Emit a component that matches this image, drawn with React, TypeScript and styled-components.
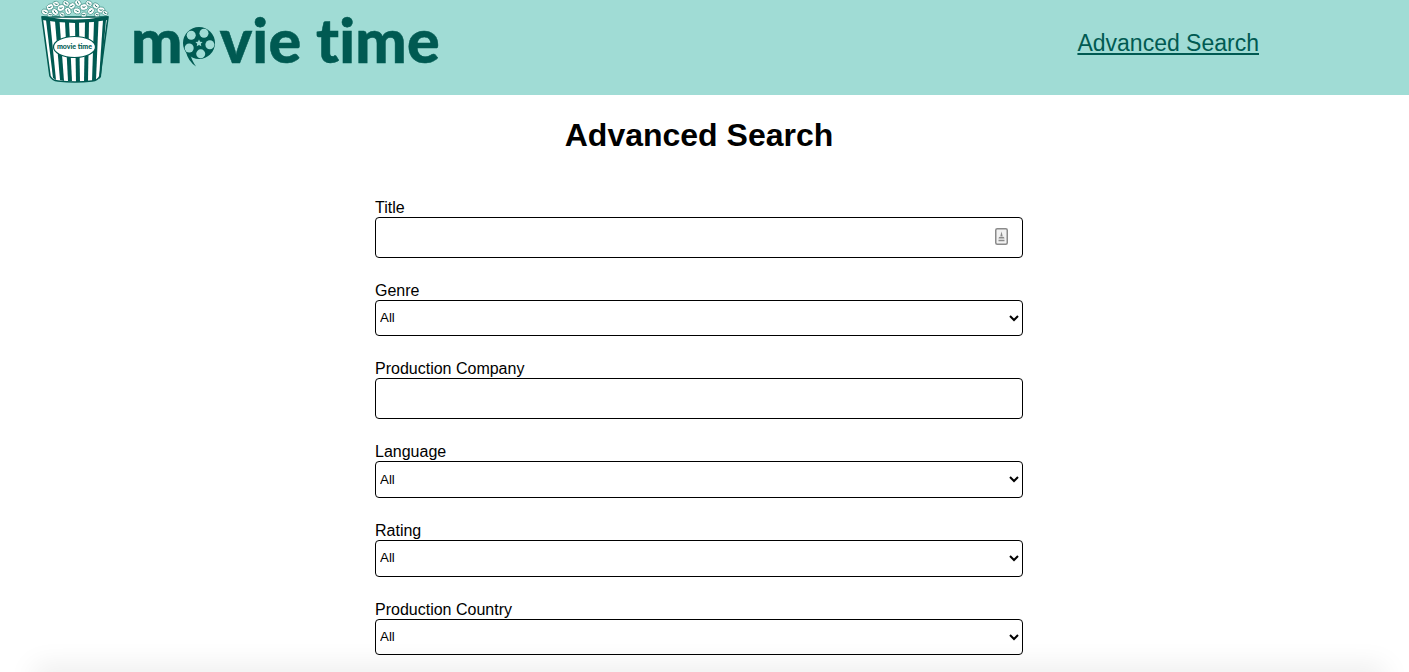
import React from "react";
import styled, { createGlobalStyle } from "styled-components";

const GlobalStyle = createGlobalStyle`
  html, body {
    margin: 0;
    padding: 0;
    height: 100%;
    overflow: hidden;
    background: #fff;
    font-family: "Liberation Sans", Arial, sans-serif;
  }
`;

const Header = styled.header`
  height: 95px;
  background: #a0dcd5;
  display: flex;
  align-items: flex-start;
  justify-content: space-between;
  padding: 0 150px 0 40px;
`;
const Brand = styled.a`
  display: flex;
  align-items: flex-start;
  text-decoration: none;
  color: #005a52;
`;
const Wordmark = styled.div`
  display: flex;
  align-items: flex-start;
  margin: 0 0 0 21px;
  height: 80px;
  font-family: Lato, sans-serif;
  font-weight: 900;
  font-size: 61px;
  line-height: 80px;
  letter-spacing: 0.2px;
  -webkit-text-stroke: 0.5px #005a52;
  white-space: pre;
`;
const Reel = styled.svg`
  margin: 27px 3px 0 0;
  flex: none;
`;
const NavLink = styled.a`
  margin-top: 29px;
  font-size: 23px;
  line-height: 28px;
  color: #005a52;
  text-decoration: underline;
`;
const Main = styled.main`
  width: 648px;
  margin: 0 auto;
  position: relative;
  left: -5.5px;
`;
const Heading = styled.h1`
  margin: 0;
  padding: 22px 0 44.7px;
  height: 37px;
  box-sizing: content-box;
  font-size: 32px;
  line-height: 37px;
  font-weight: 700;
  text-align: center;
  color: #000;
`;
const Field = styled.div`
  display: flex;
  flex-direction: column;
  margin-bottom: 23.85px;
`;
const Label = styled.label`
  font-size: 16px;
  line-height: 18px;
  height: 18px;
  color: #000;
`;
const InputWrap = styled.div`
  position: relative;
`;
const TextInput = styled.input`
  display: block;
  box-sizing: border-box;
  width: 100%;
  height: 41px;
  border: 1px solid #000;
  border-radius: 4px;
  background: #fff;
  outline: none;
  padding: 0 8px;
  font: 16px "Liberation Sans", Arial, sans-serif;
`;
const AutofillIcon = styled.svg`
  position: absolute;
  right: 15px;
  top: 11px;
`;
const Select = styled.select`
  display: block;
  box-sizing: border-box;
  width: 100%;
  height: 36.9px;
  border: 1px solid #000;
  border-radius: 4px;
  background: #fff;
  color: #000;
  padding: 0 0 1px 0;
  font: 13.33px "Liberation Sans", Arial, sans-serif;
`;
/* soft window shadow that rises from the bottom edge of the capture */
const BottomShade = styled.div`
  position: fixed;
  left: 40px;
  right: 30px;
  bottom: -14px;
  height: 14px;
  box-shadow: 0 0 28px 6px rgba(0, 0, 0, 0.08);
  pointer-events: none;
`;

const kernels: [number, number, number, number][] = [
  [5, 12, 3.6, 20], [10, 7, 3.8, -30], [15, 12, 3.8, 40], [16, 4, 3.4, 10], [21, 8, 4, -20], [26, 3.5, 3.4, 30], [28, 11, 3.8, 60],
  [32, 6, 3.6, -40], [37, 11, 3.8, 15], [38, 3, 3.6, 50], [44, 7, 4, -15], [49, 3.5, 3.4, 25], [51, 11, 3.8, -50], [56, 6, 3.6, 35],
  [61, 10, 3.8, -10], [65, 13, 3, 30], [10, 14.5, 2.8, 0], [22, 14.5, 3, 20], [44, 14.5, 3, -20], [57, 14.5, 2.8, 10],
];

const PopcornLogo = () => (
  <svg width="70" height="84" viewBox="0 0 70 84">
    <path d="M2 17 L10 76 Q12 80.5 18 81 Q35 83 52 81 Q58 80.5 60 76 L68 17 Z" fill="#fff" stroke="#005a52" strokeWidth="1.6" />
    {[
      "M6 20 L13 78 L16 80 L10 20 Z",
      "M15 21 L20 80 L24 81 L19.5 21 Z",
      "M25 22 L28 81 L32 81 L29 22 Z",
      "M35 22 L36 82 L40 82 L39 22 Z",
      "M45 22 L44 82 L48 81 L49 22 Z",
      "M54 21 L52 81 L56 80 L58.5 21 Z",
      "M63 20 L59 79 L61 77 L66 20 Z",
    ].map((d) => (
      <path key={d} d={d} fill="#005a52" />
    ))}
    <path d="M2 16 Q35 23 68 16 L67.6 20 Q35 26 2.4 20 Z" fill="#005a52" />
    <ellipse cx="34.5" cy="47" rx="21" ry="10.5" fill="#fff" stroke="#005a52" strokeWidth="1.2" />
    <text x="34.5" y="49" textAnchor="middle" fontFamily="Lato, sans-serif" fontWeight="900" fontSize="7" fill="#005a52">
      movie time
    </text>
    {kernels.map(([x, y, r, rot]) => (
      <g key={`${x}-${y}`} transform={`rotate(${rot} ${x} ${y})`}>
        <ellipse cx={x} cy={y} rx={r} ry={r * 0.8} fill="#fff" stroke="#3f9187" strokeWidth="0.7" />
        <path d={`M${x - 1.6} ${y - 0.6} q1.6 1.6 3.2 0.6`} fill="none" stroke="#1f7268" strokeWidth="0.9" />
      </g>
    ))}
  </svg>
);

const ReelIcon = () => {
  const holes = [-135, -63, 9, 81, 153].map((a) => {
    const rad = (a * Math.PI) / 180;
    return [16 + 11 * Math.cos(rad), 16 + 11 * Math.sin(rad)];
  });
  return (
    <Reel width="34" height="42" viewBox="0 0 34 42">
      <circle cx="16" cy="16" r="16" fill="#005a52" />
      {holes.map(([x, y]) => (
        <circle key={x} cx={x} cy={y} r="4.5" fill="#a0dcd5" />
      ))}
      <path d="M16 12.5 l1.1 2.3 2.5 .3 -1.8 1.7 .5 2.5 -2.3 -1.2 -2.3 1.2 .5 -2.5 -1.8 -1.7 2.5 -.3 Z" fill="#a0dcd5" />
      <path d="M3 25 Q5 34 13 39.5 Q9 33.5 8 29.5 Z" fill="#005a52" />
    </Reel>
  );
};

const fields: { label: string; kind: "text" | "select"; autofill?: boolean }[] = [
  { label: "Title", kind: "text", autofill: true },
  { label: "Genre", kind: "select" },
  { label: "Production Company", kind: "text" },
  { label: "Language", kind: "select" },
  { label: "Rating", kind: "select" },
  { label: "Production Country", kind: "select" },
];

const App = () => {
  return (
    <>
      <GlobalStyle />
      <Header>
        <Brand href="#">
          <PopcornLogo />
          <Wordmark>
            m
            <ReelIcon />
            vie time
          </Wordmark>
        </Brand>
        <NavLink href="#">Advanced Search</NavLink>
      </Header>
      <Main>
        <Heading>Advanced Search</Heading>
        <form>
          {fields.map((field) => (
            <Field key={field.label}>
              <Label>{field.label}</Label>
              {field.kind === "text" ? (
                <InputWrap>
                  <TextInput type="text" />
                  {field.autofill && (
                    <AutofillIcon width="13" height="17" viewBox="0 0 13 17">
                      <rect x="0.75" y="0.75" width="11.5" height="15.5" rx="1.5" fill="#f2f2f2" stroke="#8a8a8a" strokeWidth="1.5" />
                      <path d="M6.5 3.5 L7.6 8 H5.4 Z" fill="#8a8a8a" />
                      <path d="M3.5 10.5 Q3.5 8.5 6.5 8.5 Q9.5 8.5 9.5 10.5 Z M3.5 11.8 H9.5 V13.2 H3.5 Z" fill="#8a8a8a" />
                    </AutofillIcon>
                  )}
                </InputWrap>
              ) : (
                <Select defaultValue="All">
                  <option>All</option>
                </Select>
              )}
            </Field>
          ))}
        </form>
      </Main>
      <BottomShade />
    </>
  );
};

export default App;
